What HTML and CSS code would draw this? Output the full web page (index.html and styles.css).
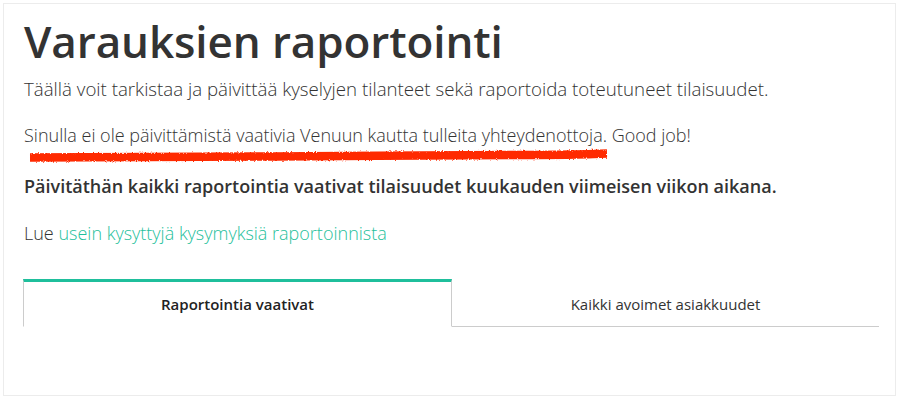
FILE: index.html
```html
<!DOCTYPE html>
<html lang="fi">
<head>
<meta charset="utf-8">
<title>Varauksien raportointi</title>
<link rel="stylesheet" href="styles.css">
</head>
<body>
<div class="card">
  <h1 class="title">Varauksien raportointi</h1>
  <p class="text lead">Täällä voit tarkistaa ja päivittää kyselyjen tilanteet sekä raportoida toteutuneet tilaisuudet.</p>
  <p class="text status">Sinulla ei ole päivittämistä vaativia Venuun kautta tulleita yhteydenottoja. Good job!
    <svg class="scribble" width="590" height="26" viewBox="0 0 590 26" aria-hidden="true">
      <defs>
        <filter id="rough" filterUnits="userSpaceOnUse" x="0" y="0" width="590" height="26">
          <feTurbulence type="fractalNoise" baseFrequency="0.7" numOctaves="2" seed="5"/>
          <feDisplacementMap in="SourceGraphic" scale="3"/>
        </filter>
      </defs>
      <path d="M5 14.5 C 90 14, 170 14.5, 250 13.5 S 430 12.5, 500 12 S 560 11, 582 10.5" stroke="#ff2a00" stroke-width="8.5" fill="none" stroke-linecap="butt" filter="url(#rough)"/>
    </svg>
  </p>
  <p class="text strong">Päivitäthän kaikki raportointia vaativat tilaisuudet kuukauden viimeisen viikon aikana.</p>
  <p class="text linkline">Lue <a class="link" href="#">usein kysyttyjä kysymyksiä raportoinnista</a></p>
  <div class="tabs">
    <div class="tab active">Raportointia vaativat</div>
    <div class="tab">Kaikki avoimet asiakkuudet</div>
  </div>
</div>
</body>
</html>
```

FILE: styles.css
```css
html, body {
  margin: 0;
  padding: 0;
  background: #ffffff;
}
body {
  font-family: "Open Sans", "Liberation Sans", sans-serif;
  color: #333333;
}
.card {
  margin: 3px 0 0 3px;
  height: 391px;
  border: 1px solid #ececec;
  padding: 0 16px 0 20px;
  box-sizing: content-box;
  width: 855px;
}
.title {
  margin: 0;
  padding-top: 9px;
  font-size: 44px;
  line-height: 56px;
  font-weight: 600;
  color: #333333;
  letter-spacing: -0.1px;
}
.text {
  margin: 22px 0 0 0;
  font-size: 18px;
  line-height: 24px;
  font-weight: 300;
  color: #333333;
}
.title + .text {
  margin-top: 8px;
}
.lead {
  font-size: 18.7px;
}
.status {
  position: relative;
}
.scribble {
  position: absolute;
  left: 1px;
  top: 20px;
  overflow: visible;
}
.strong {
  font-weight: 600;
  color: #333333;
  margin-top: 27px;
}
.linkline {
  margin-top: 23px;
}
.link {
  color: #1fbf9c;
  text-decoration: none;
}
.tabs {
  display: flex;
  margin-top: 34px;
  margin-left: -1px;
}
.tab {
  flex: 1;
  height: 44px;
  display: flex;
  align-items: center;
  justify-content: center;
  font-size: 15px;
  color: #333333;
  border-bottom: 1px solid #cccccc;
  padding-top: 3px;
}
.tab.active {
  border-top: 3px solid #1fbf9c;
  border-left: 1px solid #cccccc;
  border-right: 1px solid #cccccc;
  border-bottom: 1px solid transparent;
  padding-top: 0;
  font-weight: 600;
  color: #222222;
}
```
